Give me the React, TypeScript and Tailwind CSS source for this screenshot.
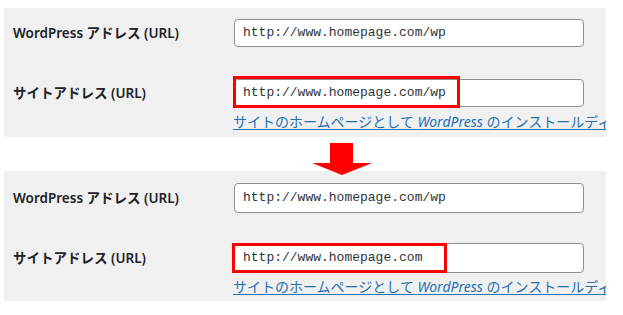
type PanelProps = {
  siteUrl: string
  // 上下で微妙に寸法が違うので丸ごとクラスで渡す
  padTop: string
  inputH: string
  rowGap: string
  linkGap: string
  markClass: string
}

const labelFont = { fontFamily: '"Noto Sans", "Noto Sans CJK JP", sans-serif' }

function UrlInput({ value, inputH, mark }: { value: string; inputH: string; mark?: string }) {
  return (
    <div className="relative w-[350px]">
      <div
        className={`${inputH} flex items-center rounded-[4px] border border-[#8c8f94] bg-white px-2 text-[13px] text-[#2c3338]`}
        style={{ fontFamily: '"Liberation Mono", monospace' }}
      >
        {value}
      </div>
      {/* 赤枠（強調） */}
      {mark && <div className={`absolute border-[3px] border-[#ff0000] ${mark}`} />}
    </div>
  )
}

function SettingsPanel({ siteUrl, padTop, inputH, rowGap, linkGap, markClass }: PanelProps) {
  return (
    <div className={`ml-[4px] w-[602px] overflow-hidden bg-[#f0f0f1] ${padTop}`}>
      {/* WordPress アドレス */}
      <div className="flex items-center">
        <div className="w-[230px] pl-[9px] text-[13.5px] font-semibold text-[#1d2327]" style={labelFont}>
          WordPress アドレス (URL)
        </div>
        <UrlInput value="http://www.homepage.com/wp" inputH={inputH} />
      </div>

      {/* サイトアドレス */}
      <div className={`flex items-center ${rowGap}`}>
        <div className="w-[230px] pl-[9px] text-[13.5px] font-semibold text-[#1d2327]" style={labelFont}>
          サイトアドレス (URL)
        </div>
        <UrlInput value={siteUrl} inputH={inputH} mark={markClass} />
      </div>

      <div className={`flex ${linkGap}`}>
        <div className="w-[229px] shrink-0" />
        <span
          className="whitespace-nowrap text-[14px] leading-[20px] text-[#2271b1] underline underline-offset-2"
          style={labelFont}
        >
          サイトのホームページとして <i>WordPress</i> のインストールディ
        </span>
      </div>
    </div>
  )
}

export default function App() {
  return (
    <div className="relative h-[315px] w-[623px] overflow-hidden bg-white">
      <div className="flex flex-col gap-[34px] pt-[8px]">
        <SettingsPanel
          siteUrl="http://www.homepage.com/wp"
          padTop="pt-[11px] h-[129px]"
          inputH="h-[28px]"
          rowGap="mt-[32px]"
          linkGap="mt-[5px]"
          markClass="-left-[1px] -top-[3px] w-[227px] h-[32px]"
        />
        <SettingsPanel
          siteUrl="http://www.homepage.com"
          padTop="pt-[12px] h-[130px]"
          inputH="h-[30px]"
          rowGap="mt-[30px]"
          linkGap="mt-[4px]"
          markClass="-left-[2px] top-0 w-[215px] h-[30px]"
        />
      </div>

      {/* 下向き矢印 */}
      <svg className="absolute left-[312px] top-[143px]" width="60" height="32" viewBox="0 0 60 32">
        <polygon points="18,0 41,0 41,20 60,20 30,32 0,20 18,20" fill="#ff0000" />
      </svg>
    </div>
  )
}
